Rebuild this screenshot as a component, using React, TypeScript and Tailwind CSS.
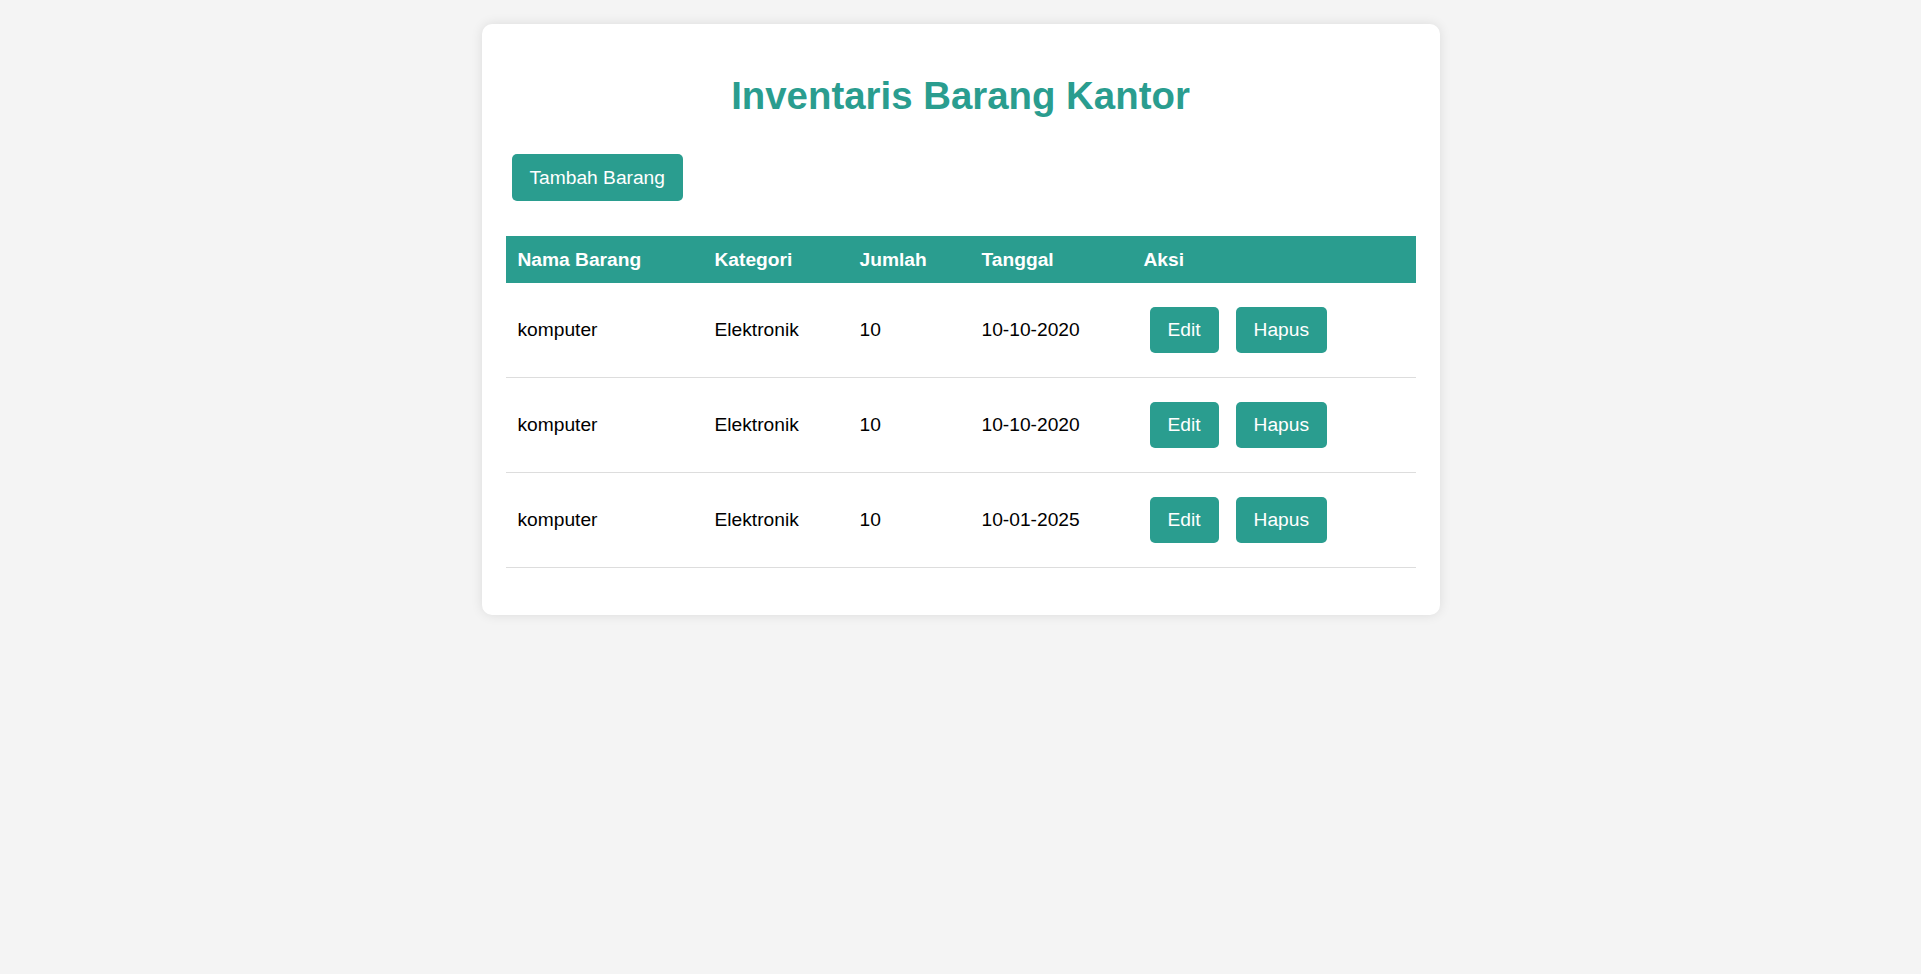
const rows = [
  { nama: "komputer", kategori: "Elektronik", jumlah: 10, tanggal: "10-10-2020" },
  { nama: "komputer", kategori: "Elektronik", jumlah: 10, tanggal: "10-10-2020" },
  { nama: "komputer", kategori: "Elektronik", jumlah: 10, tanggal: "10-01-2025" },
];

function Btn({ children, tall }: { children: string; tall?: boolean }) {
  return (
    <button
      className={
        tall
          ? "mx-[6px] inline-block cursor-pointer rounded-[5px] bg-[#2a9d8f] px-[18px] py-[12px] text-[19.2px] leading-[23px] text-white"
          : "mx-[6px] inline-block cursor-pointer rounded-[5px] bg-[#2a9d8f] px-[18px] py-[12px] text-[19.2px] leading-[22px] text-white"
      }
    >
      {children}
    </button>
  );
}

export default function App() {
  return (
    <div className="min-h-[974px] bg-[#f4f4f4] pt-[24px] font-['Liberation_Sans',Arial,sans-serif] text-[19.2px] text-black">
      <div className="mx-auto w-[958px] rounded-[10px] bg-white px-[24px] pt-[24px] pb-[47px] shadow-[0_0_12px_rgba(0,0,0,0.1)]">
        <h1 className="mt-[26px] text-center text-[38.4px] font-bold leading-[44px] text-[#2a9d8f]">
          Inventaris Barang Kantor
        </h1>
        <div className="mt-[36px]">
          <Btn tall>Tambah Barang</Btn>
        </div>
        <table className="mt-[35px] w-full border-collapse">
          <colgroup>
            <col className="w-[197px]" />
            <col className="w-[145px]" />
            <col className="w-[122px]" />
            <col className="w-[162px]" />
            <col />
          </colgroup>
          <thead>
            <tr className="bg-[#2a9d8f] text-white">
              <th className="px-[12px] py-[12px] text-left font-bold leading-[23px]">Nama Barang</th>
              <th className="px-[12px] py-[12px] text-left font-bold leading-[23px]">Kategori</th>
              <th className="px-[12px] py-[12px] text-left font-bold leading-[23px]">Jumlah</th>
              <th className="px-[12px] py-[12px] text-left font-bold leading-[23px]">Tanggal</th>
              <th className="px-[12px] py-[12px] text-left font-bold leading-[23px]">Aksi</th>
            </tr>
          </thead>
          <tbody>
            {rows.map((r, i) => (
              <tr key={i} className="border-b border-[#dddddd]">
                <td className="px-[12px] py-[24px] align-middle leading-[22px]">{r.nama}</td>
                <td className="px-[12px] py-[24px] align-middle leading-[22px]">{r.kategori}</td>
                <td className="px-[12px] py-[24px] align-middle leading-[22px]">{r.jumlah}</td>
                <td className="px-[12px] py-[24px] align-middle leading-[22px]">{r.tanggal}</td>
                <td className="px-[12px] py-[24px] align-middle leading-[22px]">
                  <div className="flex gap-[5px]">
                    <Btn>Edit</Btn>
                    <Btn>Hapus</Btn>
                  </div>
                </td>
              </tr>
            ))}
          </tbody>
        </table>
      </div>
    </div>
  );
}
